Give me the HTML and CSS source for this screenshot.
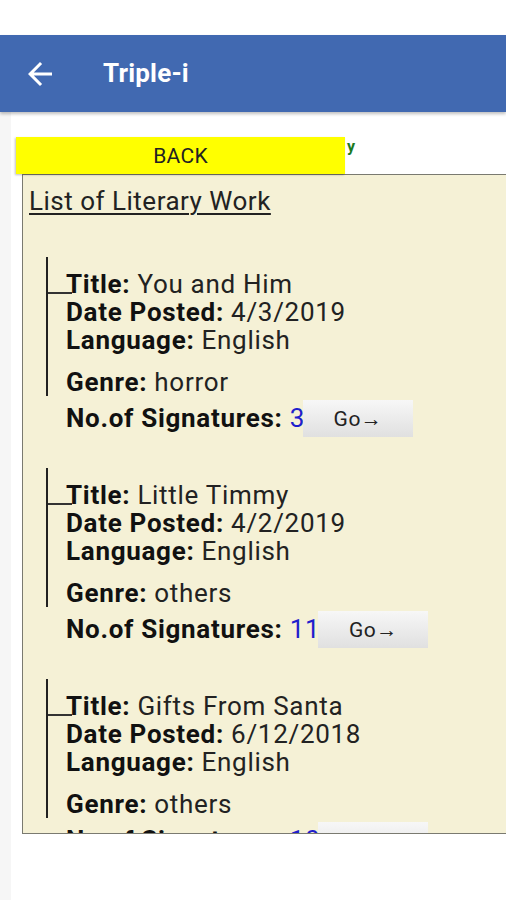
FILE: index.html
```html
<!DOCTYPE html>
<html>
<head>
<meta charset="utf-8">
<link rel="stylesheet" href="styles.css">
</head>
<body>
<div class="status"></div>
<header class="appbar">
  <svg class="back-icon" viewBox="0 0 24 24" width="36" height="36"><path d="M20 11H7.83l5.59-5.59L12 4l-8 8 8 8 1.41-1.41L7.83 13H20v-2z" fill="#fff"/></svg>
  <span class="app-title">Triple-i</span>
</header>
<main class="page">
  <div class="toprow">
    <button class="back-btn">BACK</button><span class="green">y</span>
  </div>
  <section class="list">
    <h2 class="list-title">List of Literary Work</h2>

    <div class="work">
      <div class="entry">
        <div class="line"><b>Title:</b> You and Him</div>
        <div class="line"><b>Date Posted:</b> 4/3/2019</div>
        <div class="line"><b>Language:</b> English</div>
        <div class="line genre"><b>Genre:</b> horror</div>
      </div>
      <div class="sig"><b>No.of Signatures:</b> <span class="num">3</span><button class="go">Go→</button></div>
    </div>

    <div class="work">
      <div class="entry">
        <div class="line"><b>Title:</b> Little Timmy</div>
        <div class="line"><b>Date Posted:</b> 4/2/2019</div>
        <div class="line"><b>Language:</b> English</div>
        <div class="line genre"><b>Genre:</b> others</div>
      </div>
      <div class="sig"><b>No.of Signatures:</b> <span class="num">11</span><button class="go">Go→</button></div>
    </div>

    <div class="work">
      <div class="entry">
        <div class="line"><b>Title:</b> Gifts From Santa</div>
        <div class="line"><b>Date Posted:</b> 6/12/2018</div>
        <div class="line"><b>Language:</b> English</div>
        <div class="line genre"><b>Genre:</b> others</div>
      </div>
      <div class="sig"><b>No.of Signatures:</b> <span class="num">10</span><button class="go">Go→</button></div>
    </div>
  </section>
</main>
</body>
</html>
```

FILE: styles.css
```css
html, body {
  margin: 0;
  padding: 0;
}
body {
  width: 506px;
  height: 900px;
  overflow: hidden;
  background: #f6f6f6;
  font-family: Roboto, "Liberation Sans", sans-serif;
}
.status {
  height: 35px;
  background: #fff;
}
.appbar {
  height: 77px;
  background: #4169b1;
  display: flex;
  align-items: center;
  padding-left: 22px;
  box-shadow: 0 2px 3px rgba(0, 0, 0, 0.25);
  position: relative;
  z-index: 1;
}
.back-icon {
  display: block;
}
.app-title {
  color: #fff;
  font-size: 26px;
  font-weight: 700;
  letter-spacing: 0.2px;
  margin-left: 45px;
  margin-top: -1px;
}
.page {
  margin-left: 11px;
  background: #fff;
  height: 788px;
  padding-top: 25px;
  box-sizing: border-box;
}
.toprow {
  display: flex;
  align-items: flex-start;
  padding-left: 5px;
}
.back-btn {
  width: 329px;
  height: 37px;
  background: #ffff00;
  border: none;
  font-family: Roboto, "Liberation Sans", sans-serif;
  font-size: 21px;
  letter-spacing: 0.3px;
  color: #222;
  padding: 0;
  box-shadow: -1px 1px 2px rgba(0, 0, 0, 0.25);
}
.green {
  color: #1d7a1d;
  font-weight: 700;
  font-size: 16px;
  line-height: 16px;
  margin-left: 2px;
  margin-top: 2px;
}
.list {
  margin-left: 11px;
  height: 660px;
  box-sizing: border-box;
  border: 1px solid #7a7a70;
  border-right: none;
  background: #f5f1d6;
  overflow: hidden;
  padding-left: 6px;
  padding-top: 12px;
}
.list-title {
  margin: 0;
  font-size: 26px;
  font-weight: 400;
  letter-spacing: 0.5px;
  line-height: 28px;
  color: #222;
  text-decoration: underline;
  text-decoration-thickness: 2px;
  text-underline-offset: 3px;
}
.work {
  margin-left: 17px;
  margin-bottom: 31px;
}
.list-title + .work {
  margin-top: 42px;
}
.entry {
  border-left: 2px solid #222;
  height: 139px;
  box-sizing: border-box;
  padding-top: 13px;
  padding-left: 18px;
  background-image: linear-gradient(#333, #333);
  background-repeat: no-repeat;
  background-size: 24px 2px;
  background-position: 0 35px;
}
.line {
  font-size: 26px;
  letter-spacing: 0.7px;
  line-height: 28px;
  color: #222;
  white-space: nowrap;
}
.line b, .sig b {
  color: #111;
  font-weight: 700;
}
.genre {
  margin-top: 14px;
}
.sig {
  margin-top: 4px;
  padding-left: 20px;
  height: 37px;
  line-height: 37px;
  font-size: 26px;
  letter-spacing: 0.7px;
  color: #222;
  white-space: nowrap;
}
.num {
  color: #1f1fcc;
}
.go {
  display: inline-block;
  vertical-align: top;
  width: 110px;
  height: 37px;
  margin-left: -2px;
  border: none;
  background: linear-gradient(#f7f7f7, #e0e0e0);
  font-family: Roboto, "Liberation Sans", sans-serif;
  font-size: 21px;
  letter-spacing: 0.5px;
  color: #222;
  padding: 0;
}
```
